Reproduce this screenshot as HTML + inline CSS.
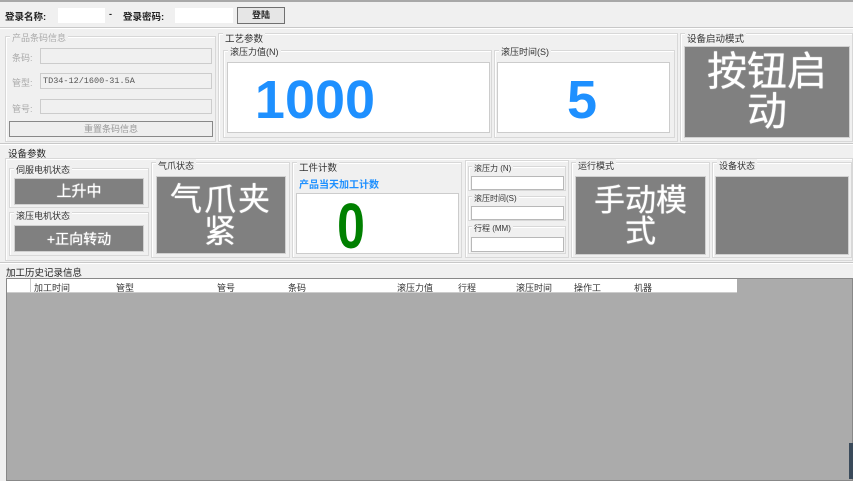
<!DOCTYPE html>
<html><head><meta charset="utf-8"><style>
*{box-sizing:border-box;margin:0;padding:0}
body{width:867px;height:487px;background:#fff;position:relative;overflow:hidden;font-family:"Liberation Sans","Noto Sans CJK SC",sans-serif;font-size:9px;color:#222}
.a{position:absolute}
.gb{position:absolute;border:1px solid #d8d8d8;box-shadow:inset 1px 1px 0 #fff}
.t{position:absolute;font-size:9px;color:#333;background:#f0f0f0;padding:0 2px;white-space:nowrap}
.in{position:absolute;background:#fff;border:1px solid #b8b8b8}
.dis{background:#f0f0f0;border-color:#ccc}
.gr{position:absolute;background:#808080;border:1px solid #d0d0d0;color:#fff;font-weight:normal;text-align:center;display:flex;align-items:center;justify-content:center;line-height:1;text-shadow:0 0 1px #fff}
.h{position:absolute;top:281px;font-size:9px;color:#333}
</style></head><body>
<div class="a" style="left:0;top:0;width:853px;height:481px;background:#f0f0f0;border-top:2px solid #a8a8a8"></div>
<div class="a" style="left:0;top:27px;width:853px;height:2px;border-top:1px solid #c8c8c8;border-bottom:1px solid #fff"></div>
<div class="a" style="left:5px;top:9px;font-weight:bold;font-size:9.5px">登录名称:</div>
<div class="in" style="left:58px;top:8px;width:47px;height:15px;border:none"></div>
<div class="a" style="left:109px;top:9px;font-weight:bold">-</div>
<div class="a" style="left:123px;top:9px;font-weight:bold;font-size:9.5px">登录密码:</div>
<div class="in" style="left:175px;top:8px;width:58px;height:15px;border:none"></div>
<div class="a" style="left:237px;top:7px;width:48px;height:17px;border:1px solid #707070;background:#e6e6e6;text-align:center;font-weight:bold;line-height:15px">登陆</div>

<div class="gb" style="left:5px;top:36px;width:211px;height:106px"></div>
<div class="t" style="left:10px;top:31px;color:#aaa">产品条码信息</div>
<div class="a" style="left:12px;top:51px;color:#aaa">条码:</div>
<div class="in dis" style="left:40px;top:48px;width:172px;height:16px"></div>
<div class="a" style="left:12px;top:76px;color:#aaa">管型:</div>
<div class="in dis" style="left:40px;top:73px;width:172px;height:16px;font-family:'Liberation Mono','Noto Sans CJK SC',monospace;color:#555;font-size:8.5px;padding:2px 2px">TD34-12/1600-31.5A</div>
<div class="a" style="left:12px;top:102px;color:#aaa">管号:</div>
<div class="in dis" style="left:40px;top:99px;width:172px;height:15px"></div>
<div class="a" style="left:9px;top:121px;width:204px;height:16px;border:1px solid #888;background:#eee;text-align:center;color:#999;line-height:14px">重置条码信息</div>

<div class="gb" style="left:218px;top:33px;width:460px;height:109px"></div>
<div class="t" style="left:223px;top:31px;font-size:9.5px">工艺参数</div>
<div class="gb" style="left:223px;top:50px;width:269px;height:88px"></div>
<div class="t" style="left:228px;top:45px">滚压力值(N)</div>
<div class="in" style="left:227px;top:62px;width:263px;height:71px;border-color:#ccc"></div>
<div class="a" style="left:227px;top:64px;width:176px;text-align:center;font-size:54px;font-weight:bold;color:#1e90ff;line-height:72px">1000</div>
<div class="gb" style="left:494px;top:50px;width:181px;height:88px"></div>
<div class="t" style="left:499px;top:45px">滚压时间(S)</div>
<div class="in" style="left:497px;top:62px;width:173px;height:71px;border-color:#ccc"></div>
<div class="a" style="left:562px;top:64px;width:40px;text-align:center;font-size:54px;font-weight:bold;color:#1e90ff;line-height:72px">5</div>

<div class="gb" style="left:680px;top:33px;width:173px;height:109px"></div>
<div class="t" style="left:685px;top:31px;font-size:9.5px">设备启动模式</div>
<div class="gr" style="left:684px;top:46px;width:166px;height:92px;font-size:40px;padding:0 12px">按钮启动</div>

<div class="a" style="left:0;top:143px;width:853px;height:2px;border-top:1px solid #c8c8c8;border-bottom:1px solid #fff"></div>
<div class="a" style="left:8px;top:146px;font-size:9.5px">设备参数</div>
<div class="gb" style="left:5px;top:158px;width:848px;height:103px"></div>
<div class="gb" style="left:9px;top:168px;width:140px;height:40px"></div>
<div class="t" style="left:14px;top:163px">伺服电机状态</div>
<div class="gr" style="left:14px;top:178px;width:130px;height:27px;font-size:15px">上升中</div>
<div class="gb" style="left:9px;top:212px;width:140px;height:44px"></div>
<div class="t" style="left:14px;top:209px">滚压电机状态</div>
<div class="gr" style="left:14px;top:225px;width:130px;height:27px;font-size:14px">+正向转动</div>
<div class="gb" style="left:151px;top:162px;width:139px;height:96px"></div>
<div class="t" style="left:156px;top:159px">气爪状态</div>
<div class="gr" style="left:156px;top:176px;width:130px;height:78px;font-size:32px;padding:0 6px;letter-spacing:2px">气爪夹紧</div>
<div class="gb" style="left:292px;top:162px;width:170px;height:96px"></div>
<div class="t" style="left:297px;top:160px;font-size:9.5px">工件计数</div>
<div class="a" style="left:299px;top:176px;color:#1e90ff;font-weight:bold;font-size:10px">产品当天加工计数</div>
<div class="in" style="left:296px;top:193px;width:163px;height:61px;border-color:#ccc"></div>
<div class="a" style="left:326px;top:193px;width:50px;text-align:center;font-size:64px;font-weight:bold;color:#008000;line-height:66px;transform:scaleX(0.78)">0</div>
<div class="gb" style="left:465px;top:160px;width:104px;height:98px"></div>
<div class="gb" style="left:468px;top:166px;width:98px;height:25px"></div>
<div class="t" style="left:472px;top:163px;font-size:8px">滚压力 (N)</div>
<div class="in" style="left:471px;top:176px;width:93px;height:14px"></div>
<div class="gb" style="left:468px;top:196px;width:98px;height:25px"></div>
<div class="t" style="left:472px;top:193px;font-size:8px">滚压时间(S)</div>
<div class="in" style="left:471px;top:206px;width:93px;height:14px"></div>
<div class="gb" style="left:468px;top:226px;width:98px;height:28px"></div>
<div class="t" style="left:472px;top:223px;font-size:8px">行程 (MM)</div>
<div class="in" style="left:471px;top:237px;width:93px;height:15px"></div>
<div class="gb" style="left:571px;top:162px;width:139px;height:96px"></div>
<div class="t" style="left:576px;top:159px">运行模式</div>
<div class="gr" style="left:575px;top:176px;width:131px;height:79px;font-size:31px;padding:0 6px">手动模式</div>
<div class="gb" style="left:712px;top:162px;width:140px;height:96px"></div>
<div class="t" style="left:717px;top:159px">设备状态</div>
<div class="gr" style="left:715px;top:176px;width:134px;height:79px"></div>

<div class="a" style="left:0;top:262px;width:853px;height:2px;border-top:1px solid #c8c8c8;border-bottom:1px solid #fff"></div>
<div class="a" style="left:6px;top:265px;font-size:9.5px">加工历史记录信息</div>
<div class="a" style="left:6px;top:278px;width:847px;height:203px;background:#ababab;border:1px solid #888"></div>
<div class="a" style="left:7px;top:279px;width:730px;height:14px;background:#fff;border-bottom:1px solid #ccc"></div>
<div class="a" style="left:30px;top:279px;width:1px;height:14px;background:#ccc"></div>
<div class="h" style="left:34px">加工时间</div><div class="h" style="left:116px">管型</div><div class="h" style="left:217px">管号</div><div class="h" style="left:288px">条码</div><div class="h" style="left:397px">滚压力值</div><div class="h" style="left:458px">行程</div><div class="h" style="left:516px">滚压时间</div><div class="h" style="left:574px">操作工</div><div class="h" style="left:634px">机器</div>
<div class="a" style="left:849px;top:443px;width:4px;height:36px;background:#3a4a5a"></div>
</body></html>
